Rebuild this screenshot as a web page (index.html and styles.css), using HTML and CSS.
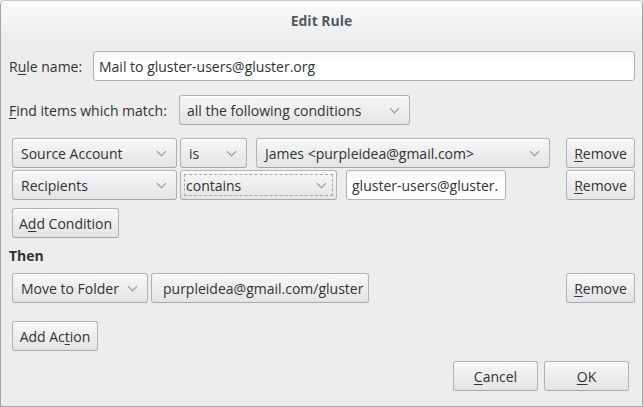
FILE: index.html
```html
<!DOCTYPE html>
<html>
<head>
<meta charset="utf-8">
<link rel="stylesheet" href="styles.css">
</head>
<body>
<div class="window">
  <div class="titlebar">Edit Rule</div>
  <div class="content">
    <div class="row name-row">
      <span class="label">R<u>u</u>le name:</span>
      <div class="entry entry-name">Mail to gluster-users@gluster.org</div>
    </div>
    <div class="row find-row">
      <span class="label"><u>F</u>ind items which match:</span>
      <div class="btn combo combo-find">all the following conditions<span class="chev"></span></div>
    </div>
    <div class="cond-list">
      <div class="row cond">
        <div class="btn combo c-field">Source Account<span class="chev"></span></div>
        <div class="btn combo c-op-is">is<span class="chev"></span></div>
        <div class="btn combo c-value">James &lt;purpleidea@gmail.com&gt;<span class="chev"></span></div>
        <div class="spacer"></div>
        <div class="btn remove"><u>R</u>emove</div>
      </div>
      <div class="row cond">
        <div class="btn combo c-field">Recipients<span class="chev"></span></div>
        <div class="btn combo c-op-contains focused">contains<span class="chev"></span></div>
        <div class="entry c-entry">gluster-users@gluster.</div>
        <div class="spacer"></div>
        <div class="btn remove"><u>R</u>emove</div>
      </div>
    </div>
    <div class="row add-row">
      <div class="btn add-cond">A<u>d</u>d Condition</div>
    </div>
    <div class="then">Then</div>
    <div class="row action">
      <div class="btn combo a-type">Move to Folder<span class="chev"></span></div>
      <div class="btn a-folder">purpleidea@gmail.com/gluster</div>
      <div class="spacer"></div>
      <div class="btn remove"><u>R</u>emove</div>
    </div>
    <div class="row add-action-row">
      <div class="btn add-action">Add Ac<u>t</u>ion</div>
    </div>
    <div class="row footer">
      <div class="btn dlg"><u>C</u>ancel</div>
      <div class="btn dlg"><u>O</u>K</div>
    </div>
  </div>
</div>
</body>
</html>
```
FILE: styles.css
```css
* { box-sizing: border-box; }
html, body { margin: 0; padding: 0; background: #ededed; }
body {
  font-family: "Open Sans", "Noto Sans", sans-serif;
  font-size: 14px;
  color: #2e3436;
}
u { text-decoration: underline; text-underline-offset: 2px; text-decoration-thickness: 1px; }
.window {
  width: 643px;
  height: 407px;
  border: 1px solid #a3a3a3;
  border-top-color: #c8c8c8;
  border-radius: 5px 5px 0 0;
  background: #ededed;
  overflow: hidden;
}
.titlebar {
  height: 38px;
  display: flex;
  align-items: center;
  justify-content: center;
  font-weight: bold;
  color: #4f5a60;
  background: linear-gradient(#fbfbfb, #ededed);
  padding-top: 1px;
}
.content {
  display: flex;
  flex-direction: column;
  padding: 0 7px 0 7px;
}
.row { display: flex; align-items: center; }
.label { white-space: nowrap; color: #2e3436; padding-left: 1px; }
.spacer { flex: 1; }
.btn {
  height: 30px;
  display: flex;
  align-items: center;
  padding: 0 8px;
  border: 1px solid #b2b2b2;
  border-bottom-color: #a6a6a6;
  border-radius: 3px;
  background: linear-gradient(#f7f7f7, #e4e4e4);
  box-shadow: inset 0 1px #ffffff;
  white-space: nowrap;
  color: #2e3436;
  position: relative;
}
.combo { padding-right: 26px; }
.chev {
  position: absolute;
  right: 11px;
  top: 9px;
  width: 7px;
  height: 7px;
  border-right: 1.3px solid #8e9191;
  border-bottom: 1.3px solid #8e9191;
  transform: rotate(45deg);
}
.entry {
  height: 30px;
  display: flex;
  align-items: center;
  padding: 0 5px;
  border: 1px solid #b0b0b0;
  border-radius: 3px;
  background: linear-gradient(#f6f6f6, #ffffff 40%);
  white-space: nowrap;
  overflow: hidden;
}
.name-row { margin-top: 12px; }
.name-row .label { width: 85px; }
.entry-name { flex: 1; }
.find-row { margin-top: 14px; }
.find-row .label { width: 171px; }
.combo-find { width: 231px; padding-left: 7px; }
.cond-list { margin-top: 13px; display: flex; flex-direction: column; gap: 2px; padding-left: 4px; }
.cond { gap: 3px; }
.c-field { width: 165px; }
.c-op-is { width: 67px; }
.c-value { width: 294px; margin-left: 6px; }
.c-op-contains { width: 157px; }
.c-entry { width: 160px; margin-left: 6px; }
.focused::after {
  content: "";
  position: absolute;
  left: 3px; top: 3px; right: 3px; bottom: 3px;
  border: 1px dashed #a9a9a9;
}
.focused { padding-left: 5px; }
.remove { width: 69px; justify-content: center; padding: 0; }
.add-row { margin-top: 8px; padding-left: 4px; }
.add-cond { width: 107px; justify-content: center; padding: 0; }
.then { margin-top: 8px; font-weight: bold; height: 20px; line-height: 20px; padding-left: 1px; }
.action { margin-top: 7px; padding-left: 4px; gap: 3px; }
.a-type { width: 136px; }
.a-folder { width: 218px; padding-left: 11px; }
.add-action-row { margin-top: 18px; padding-left: 4px; }
.add-action { width: 86px; justify-content: center; padding: 0; }
.footer { margin-top: 10px; justify-content: flex-end; gap: 6px; padding-right: 6px; }
.dlg { width: 85px; justify-content: center; }
```
